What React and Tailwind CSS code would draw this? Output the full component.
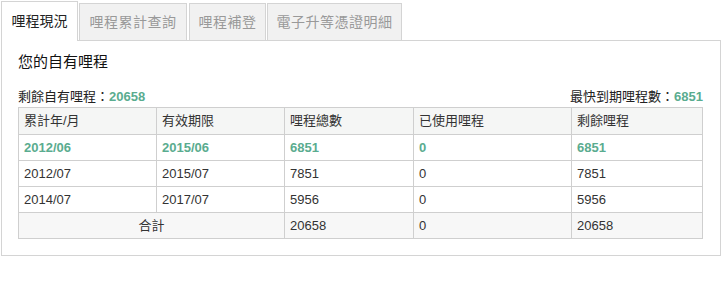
const rows = [
  { month: '2012/06', expiry: '2015/06', total: '6851', used: '0', left: '6851', highlight: true },
  { month: '2012/07', expiry: '2015/07', total: '7851', used: '0', left: '7851' },
  { month: '2014/07', expiry: '2017/07', total: '5956', used: '0', left: '5956' },
]

const tabs = [
  { label: '哩程累計查詢', width: 'w-[108px]', gap: 'ml-[1px]' },
  { label: '哩程補登', width: 'w-[77px]', gap: 'ml-[2px]' },
  { label: '電子升等憑證明細', width: 'w-[135px]', gap: 'ml-[1px]' },
]

export default function App() {
  const cell = 'border border-[#cfcfcf] px-[5px] h-[26px] align-middle'

  return (
    <div className="w-[722px] h-[300px] bg-white pt-[1px] text-[#333] font-['Liberation_Sans','Noto_Sans_CJK_TC',sans-serif]">
      {/* Tabs */}
      <div className="flex items-end pl-[1px]">
        <div className="relative z-10 -mb-px flex h-[40px] w-[77px] items-center justify-center border border-b-0 border-[#d4d4d4] bg-white pb-[1px] text-[14px] text-[#222]">
          哩程現況
        </div>
        {tabs.map((tab) => (
          <div
            key={tab.label}
            className={`${tab.gap} ${tab.width} flex h-[37px] items-center justify-center border border-b-0 border-[#d4d4d4] bg-[#f1f1f1] text-[14px] tracking-[0.5px] text-[#999]`}
          >
            {tab.label}
          </div>
        ))}
      </div>

      {/* Panel */}
      <div className="ml-[1px] w-[720px] h-[216px] border border-[#d4d4d4] pl-4 pr-[17px] pt-[11px]">
        <h2 className="text-[15px] leading-[20px] font-normal text-[#111]">您的自有哩程</h2>

        <div className="mt-[17px] flex items-center justify-between text-[13px] leading-[16px] text-[#222]">
          <div>
            剩餘自有哩程：<span className="font-bold text-[#5aac8f]">20658</span>
          </div>
          <div>
            最快到期哩程數：<span className="font-bold text-[#5aac8f]">6851</span>
          </div>
        </div>

        <table className="mt-[2px] w-[684px] table-fixed border-collapse text-left text-[13px]">
          <colgroup>
            <col className="w-[138px]" />
            <col className="w-[128px]" />
            <col className="w-[129px]" />
            <col className="w-[158px]" />
            <col className="w-[131px]" />
          </colgroup>
          <thead>
            <tr className="bg-[#f5f6f5]">
              <th className={`${cell} h-[27px] font-normal`}>累計年/月</th>
              <th className={`${cell} h-[27px] font-normal`}>有效期限</th>
              <th className={`${cell} h-[27px] font-normal`}>哩程總數</th>
              <th className={`${cell} h-[27px] font-normal`}>已使用哩程</th>
              <th className={`${cell} h-[27px] font-normal`}>剩餘哩程</th>
            </tr>
          </thead>
          <tbody>
            {rows.map((row) => {
              const tone = row.highlight ? 'font-bold text-[#5aac8f]' : ''
              return (
                <tr key={row.month}>
                  <td className={`${cell} ${tone}`}>{row.month}</td>
                  <td className={`${cell} ${tone}`}>{row.expiry}</td>
                  <td className={`${cell} ${tone}`}>{row.total}</td>
                  <td className={`${cell} ${tone}`}>{row.used}</td>
                  <td className={`${cell} ${tone}`}>{row.left}</td>
                </tr>
              )
            })}
            <tr className="bg-[#f7f7f7]">
              <td colSpan={2} className={`${cell} text-center`}>合計</td>
              <td className={cell}>20658</td>
              <td className={cell}>0</td>
              <td className={cell}>20658</td>
            </tr>
          </tbody>
        </table>
      </div>
    </div>
  )
}
